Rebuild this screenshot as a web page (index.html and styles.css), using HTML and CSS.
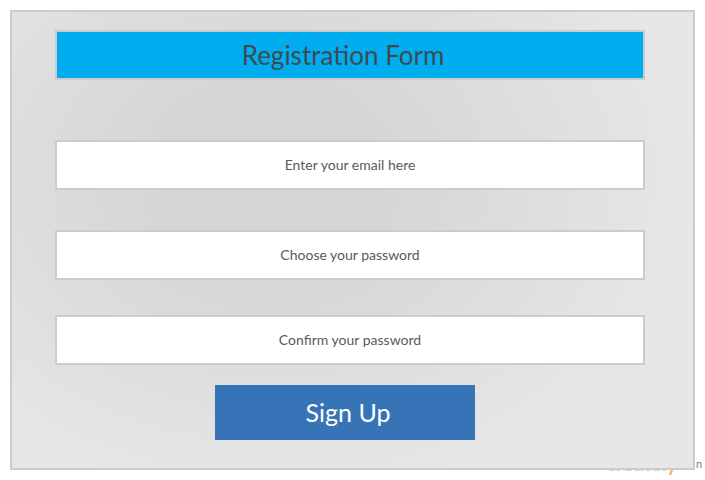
FILE: index.html
```html
<!DOCTYPE html>
<html>
<head>
<meta charset="utf-8">
<link rel="stylesheet" href="styles.css">
</head>
<body>
<div class="page">
  <div class="watermark"><span class="wm-blue">createl</span><span class="wm-y">y</span></div>
  <span class="wm-n">n</span>
  <form class="card">
    <h1 class="title">Registration Form</h1>
    <div class="field f1">Enter your email here</div>
    <div class="field f2">Choose your password</div>
    <div class="field f3">Confirm your password</div>
    <button type="button" class="btn">Sign Up</button>
  </form>
</div>
</body>
</html>
```
FILE: styles.css
```css
html, body {
  margin: 0;
  padding: 0;
  background: #ffffff;
}
.page {
  position: relative;
  padding: 10px;
  width: 685px;
  font-family: Lato, "Open Sans", sans-serif;
}
.card {
  position: relative;
  box-sizing: border-box;
  width: 685px;
  height: 460px;
  margin: 0;
  border: 2px solid #cccccc;
  padding: 18px 48px 0 43px;
  background: radial-gradient(ellipse 62% 72% at 38% 36%, #d5d5d5 25%, #dcdcdc 55%, #e7e7e7 100%);
  display: flex;
  flex-direction: column;
  align-items: flex-start;
}
.title {
  box-sizing: border-box;
  width: 590px;
  height: 50px;
  margin: 0;
  border: 2px solid #cccccc;
  background: #00aeef;
  color: #3e4a52;
  font-weight: 400;
  font-size: 26px;
  display: flex;
  align-items: center;
  justify-content: center;
  padding-right: 14px;
}
.field {
  box-sizing: border-box;
  width: 590px;
  height: 50px;
  border: 2px solid #cccccc;
  background: #ffffff;
  color: #5a5a5a;
  font-size: 14px;
  display: flex;
  align-items: center;
  justify-content: center;
  padding-bottom: 2px;
}
.f1 { margin-top: 60px; }
.f2 { margin-top: 40px; }
.f3 { margin-top: 35px; }
.btn {
  margin: 20px 0 0 160px;
  width: 260px;
  height: 55px;
  border: none;
  background: #3673b7;
  color: #ffffff;
  font-family: Lato, "Open Sans", sans-serif;
  font-size: 25px;
  padding: 0 0 2px 6px;
}
.watermark {
  position: absolute;
  left: 606px;
  top: 451px;
  font-size: 20px;
  line-height: 24px;
  font-family: Lato, sans-serif;
  font-weight: 700;
  white-space: nowrap;
}
.wm-blue { color: #b9d1ea; }
.wm-y { color: #f5b070; }
.wm-n {
  position: absolute;
  left: 696px;
  top: 457px;
  color: #777;
  font-size: 11px;
  line-height: 13px;
  font-family: Lato, sans-serif;
}
```
